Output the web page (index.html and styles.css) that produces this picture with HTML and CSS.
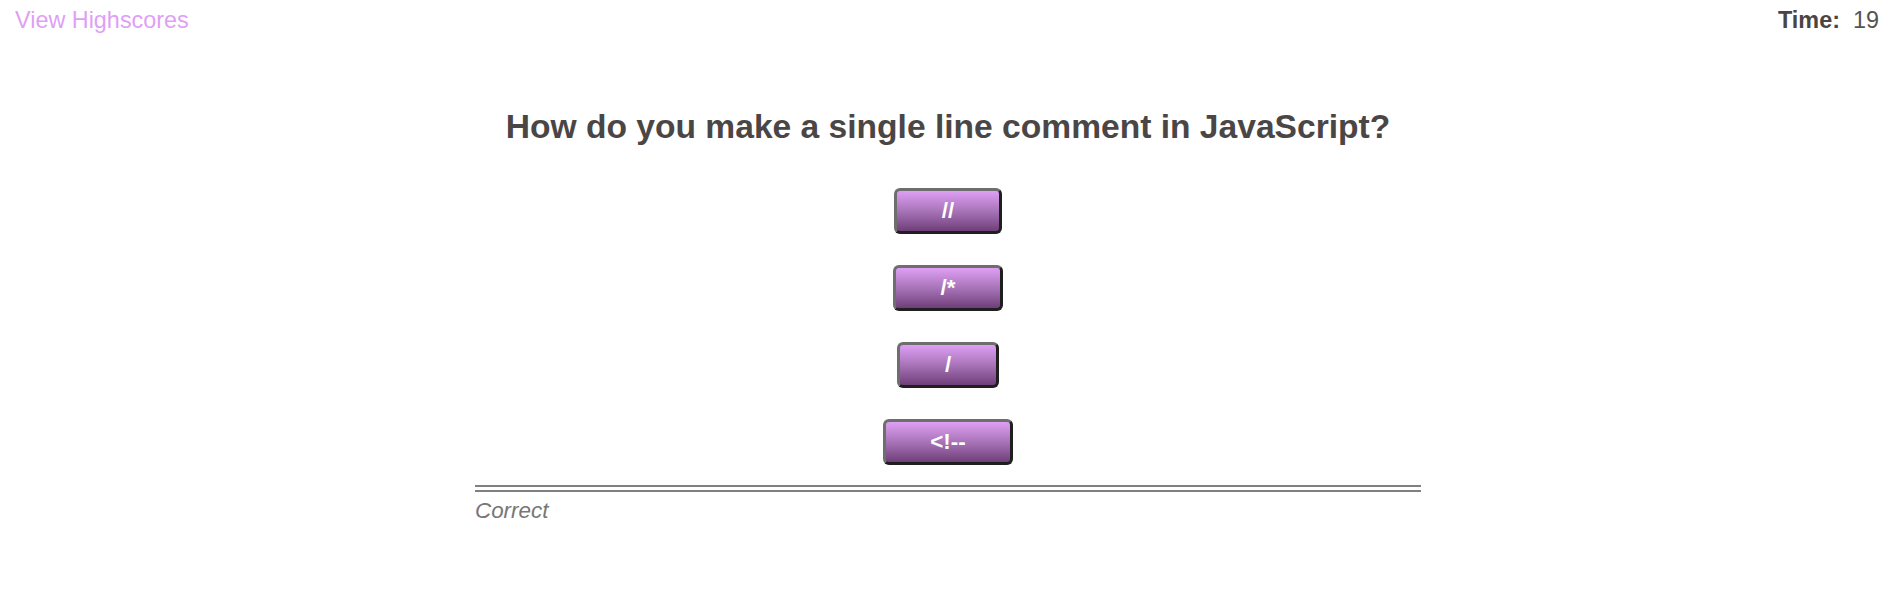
FILE: index.html
```html
<!DOCTYPE html>
<html lang="en">
<head>
<meta charset="utf-8">
<title>Code Quiz</title>
<link rel="stylesheet" href="styles.css">
</head>
<body>
<header class="topbar">
  <a class="highscores-link" href="#">View Highscores</a>
  <div class="timer"><span class="timer-label">Time:</span><span class="timer-value">19</span></div>
</header>
<div class="stage">
  <main class="quiz">
    <h1 class="question">How do you make a single line comment in JavaScript?</h1>
    <div class="answers">
      <button class="answer">//</button>
      <button class="answer">/*</button>
      <button class="answer">/</button>
      <button class="answer">&lt;!--</button>
    </div>
    <div class="divider"></div>
    <p class="feedback">Correct</p>
  </main>
</div>
</body>
</html>
```
FILE: styles.css
```css
html, body {
  margin: 0;
  padding: 0;
  background: #ffffff;
}

body {
  font-family: "Liberation Sans", Arial, sans-serif;
  font-size: 22.4px;
  color: #4a4a4a;
}

.topbar {
  display: flex;
  justify-content: space-between;
  align-items: flex-start;
  padding: 7px 6px 0 15px;
  font-size: 23.4px;
}

.highscores-link {
  color: #df9ff5;
  text-decoration: none;
}

.timer {
  display: flex;
  gap: 13px;
}

.timer-label {
  font-weight: bold;
  color: #4a4545;
}

.timer-value {
  color: #555;
}

.stage {
  padding-left: 11px;
}

.quiz {
  width: 946px;
  margin: 0 auto;
}

.question {
  margin: 74px 0 0;
  font-size: 33.6px;
  font-weight: bold;
  text-align: center;
  color: #4b4646;
}

.answers {
  display: flex;
  flex-direction: column;
  align-items: center;
  gap: 31px;
  margin-top: 42px;
}

.answer {
  font-family: "Liberation Sans", Arial, sans-serif;
  font-size: 22.4px;
  font-weight: bold;
  color: #ffffff;
  line-height: 26px;
  padding: 7px 44.7px;
  border: 3px solid;
  border-color: #6e6e6e #1f1f1f #1f1f1f #6e6e6e;
  border-radius: 6px;
  background: linear-gradient(to bottom, #de9ff4 0%, #a874b8 50%, #6f3f79 100%);
  cursor: pointer;
}

.divider {
  margin-top: 20px;
  height: 3px;
  border-top: 2px solid #808080;
  border-bottom: 2px solid #808080;
}

.feedback {
  margin: 6px 0 0;
  font-style: italic;
  color: #777;
}
```
